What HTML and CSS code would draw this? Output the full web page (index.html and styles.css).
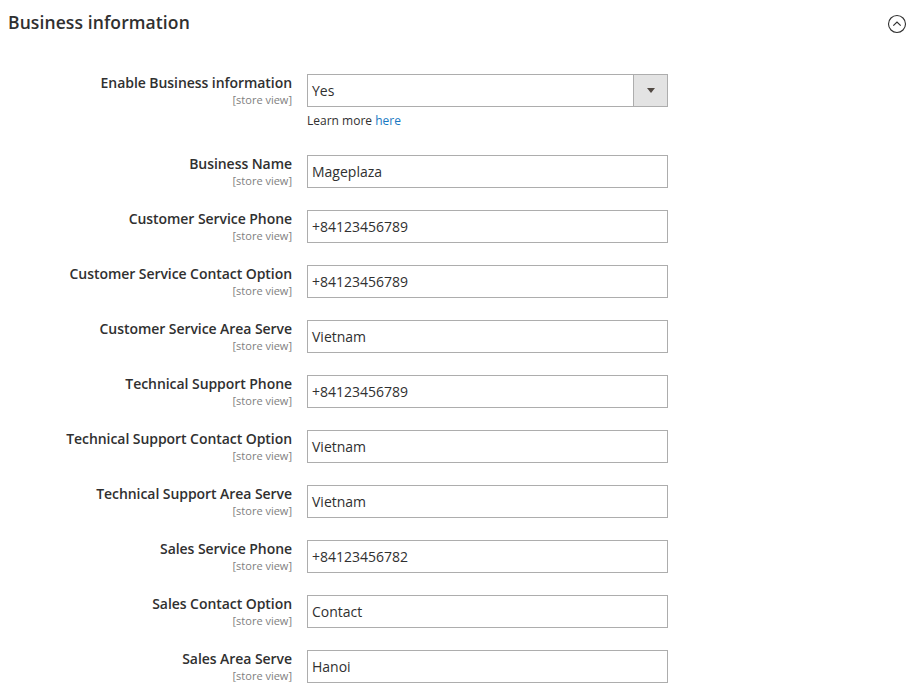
FILE: index.html
```html
<!DOCTYPE html>
<html>
<head>
<meta charset="utf-8">
<link rel="stylesheet" href="styles.css">
</head>
<body>
<div class="section">
  <div class="section-head">
    <h2 class="section-title">Business information</h2>
    <svg class="toggle" width="20" height="20" viewBox="0 0 20 20">
      <circle cx="10" cy="10" r="8.5" fill="none" stroke="#303030" stroke-width="1.1"/>
      <path d="M6.3 11.6 L10 8 L13.7 11.6" fill="none" stroke="#303030" stroke-width="1.2"/>
    </svg>
  </div>
  <div class="form">
    <div class="row">
      <div class="label"><span class="name">Enable Business information</span><span class="scope">[store view]</span></div>
      <div class="control">
        <div class="select"><span class="val">Yes</span><span class="arrow"></span></div>
        <div class="note">Learn more <a href="#">here</a></div>
      </div>
    </div>
    <div class="row">
      <div class="label"><span class="name">Business Name</span><span class="scope">[store view]</span></div>
      <div class="control"><div class="input">Mageplaza</div></div>
    </div>
    <div class="row">
      <div class="label"><span class="name">Customer Service Phone</span><span class="scope">[store view]</span></div>
      <div class="control"><div class="input">+84123456789</div></div>
    </div>
    <div class="row">
      <div class="label"><span class="name">Customer Service Contact Option</span><span class="scope">[store view]</span></div>
      <div class="control"><div class="input">+84123456789</div></div>
    </div>
    <div class="row">
      <div class="label"><span class="name">Customer Service Area Serve</span><span class="scope">[store view]</span></div>
      <div class="control"><div class="input">Vietnam</div></div>
    </div>
    <div class="row">
      <div class="label"><span class="name">Technical Support Phone</span><span class="scope">[store view]</span></div>
      <div class="control"><div class="input">+84123456789</div></div>
    </div>
    <div class="row">
      <div class="label"><span class="name">Technical Support Contact Option</span><span class="scope">[store view]</span></div>
      <div class="control"><div class="input">Vietnam</div></div>
    </div>
    <div class="row">
      <div class="label"><span class="name">Technical Support Area Serve</span><span class="scope">[store view]</span></div>
      <div class="control"><div class="input">Vietnam</div></div>
    </div>
    <div class="row">
      <div class="label"><span class="name">Sales Service Phone</span><span class="scope">[store view]</span></div>
      <div class="control"><div class="input">+84123456782</div></div>
    </div>
    <div class="row">
      <div class="label"><span class="name">Sales Contact Option</span><span class="scope">[store view]</span></div>
      <div class="control"><div class="input">Contact</div></div>
    </div>
    <div class="row">
      <div class="label"><span class="name">Sales Area Serve</span><span class="scope">[store view]</span></div>
      <div class="control"><div class="input">Hanoi</div></div>
    </div>
  </div>
</div>
</body>
</html>
```
FILE: styles.css
```css
html, body {
  margin: 0;
  padding: 0;
  background: #fff;
  font-family: "Open Sans", "Liberation Sans", sans-serif;
  color: #303030;
}
.section {
  padding: 0 8px 0 8px;
}
.section-head {
  display: flex;
  align-items: center;
  justify-content: space-between;
  height: 43px;
}
.section-title {
  margin: 0;
  font-size: 17.5px;
  font-weight: 600;
  color: #303030;
  letter-spacing: 0.1px;
}
.toggle {
  margin-right: 0px;
  margin-top: 4px;
}
.form {
  display: flex;
  flex-direction: column;
  gap: 22px;
  padding-top: 31px;
}
.row {
  display: grid;
  grid-template-columns: 284px 361px;
  column-gap: 15px;
  align-items: start;
}
.label {
  display: flex;
  flex-direction: column;
  align-items: flex-end;
  text-align: right;
  height: 33px;
}
.name {
  font-size: 14px;
  font-weight: 600;
  line-height: 18px;
  letter-spacing: -0.06px;
  color: #303030;
}
.scope {
  font-size: 11px;
  line-height: 16px;
  color: #808080;
}
.input, .select {
  box-sizing: border-box;
  height: 33px;
  border: 1px solid #adadad;
  font-size: 14px;
  line-height: 31px;
  padding-left: 4px;
  color: #303030;
  background: #fff;
}
.select {
  display: flex;
  justify-content: space-between;
  padding-right: 0;
}
.arrow {
  width: 33px;
  height: 31px;
  background: #e3e3e3;
  border-left: 1px solid #adadad;
  position: relative;
}
.arrow::after {
  content: "";
  position: absolute;
  left: 13px;
  top: 13px;
  border-left: 4px solid transparent;
  border-right: 4px solid transparent;
  border-top: 5px solid #514943;
}
.note {
  font-size: 12px;
  line-height: 16px;
  margin-top: 6px;
  margin-bottom: 4px;
  color: #303030;
}
.note a {
  color: #1979c3;
  text-decoration: none;
}
```
